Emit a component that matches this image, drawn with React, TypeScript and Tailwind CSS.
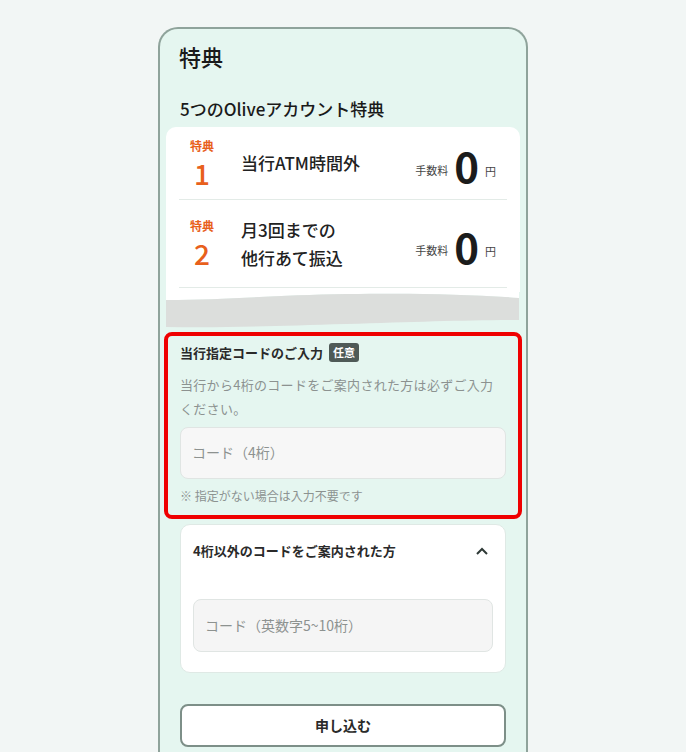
import React from 'react';

const font = { fontFamily: '"Noto Sans CJK JP", "Noto Sans", sans-serif' };

const Perk: React.FC<{ no: string; lines: string[]; h: string }> = ({ no, lines, h }) => (
  <div className={`flex items-center border-b border-[#e3ebe7] ${h}`}>
    <div className="w-[46px] flex flex-col items-center text-[#e8601c] leading-none">
      <span className="text-[12px] font-bold">特典</span>
      <span className="text-[28px] font-medium mt-[7px]">{no}</span>
    </div>
    <div className="ml-[16px] flex-1 text-[17px] font-medium text-[#222] leading-[28px]">
      {lines.map(l => (
        <div key={l}>{l}</div>
      ))}
    </div>
    <div className="flex items-end pr-[11px]">
      <span className="text-[11px] text-[#444] mb-[4px]">手数料</span>
      <span className="text-[42px] font-bold text-[#1c1c1c] leading-none mx-[6px] -mb-[4px]">0</span>
      <span className="text-[11px] text-[#444] mb-[3px]">円</span>
    </div>
  </div>
);

const Wave: React.FC = () => (
  <svg width="353" height="38" viewBox="0 0 353 38" className="block">
    <path d="M0 0 H353 V6 C300 2 250 1 180 2 C110 3 60 8 0 8 Z" fill="#ffffff" />
    <path d="M0 8 C60 8 110 3 180 2 C250 1 300 2 353 6 V28 C300 28 250 30 180 32 C110 34 60 36 0 35 Z" fill="#dcdedc" />
  </svg>
);

export default function App() {
  return (
    <div className="h-[752px] overflow-hidden bg-[#f2f6f5] flex justify-center pt-[27px]" style={font}>
      <div className="w-[370px] h-[760px] border-2 border-b-0 border-[#8fa39b] rounded-t-[20px] bg-[#e5f6f0] px-[6px]">
        <h1 className="text-[22px] font-medium text-[#1a1a1a] pl-[13px] pt-[11px] leading-[33px]">特典</h1>
        <h2 className="text-[17px] font-medium text-[#1a1a1a] pl-[14px] mt-[24px] leading-[24px]">5つのOliveアカウント特典</h2>
        <div className="mt-[6px]">
          <div className="bg-white rounded-t-[10px] px-[13px] pb-[4px]">
            <Perk no="1" lines={['当行ATM時間外']} h="h-[73px]" />
            <Perk no="2" lines={['月3回までの', '他行あて振込']} h="h-[88px]" />
          </div>
          <Wave />
        </div>

        <div className="mt-[2px] mx-[-2px] border-[4px] border-[#ef0000] rounded-[8px] px-[12px] pt-[7px] pb-[10px]">
          <div className="flex items-center gap-[6px]">
            <span className="text-[13px] font-bold text-[#2a2a2a]">当行指定コードのご入力</span>
            <span className="bg-[#4f5a57] text-white text-[11px] font-bold rounded-[3px] px-[4px] leading-[19px]">任意</span>
          </div>
          <p className="mt-[10px] text-[13px] tracking-[0.3px] text-[#8c9290] leading-[24px]">
            当行から4桁のコードをご案内された方は必ずご入力
            <br />
            ください。
          </p>
          <div className="mt-[6px] h-[52px] rounded-[8px] bg-[#f7f7f7] border border-[#e0e5e3] flex items-center px-[11px] text-[14px] text-[#8d9290]">
            コード（4桁）
          </div>
          <p className="mt-[8px] text-[12px] text-[#8c9290] leading-[18px]">※ 指定がない場合は入力不要です</p>
        </div>

        <div className="mt-[5px] mx-[14px] bg-white rounded-[10px] border border-[#dfe9e5] px-[12px] pt-[16px] pb-[20px]">
          <div className="flex items-center justify-between">
            <span className="text-[13px] font-bold text-[#2a2a2a] leading-[20px]">4桁以外のコードをご案内された方</span>
            <svg width="14" height="10" viewBox="0 0 14 10" className="mr-[4px]">
              <path d="M2 8 L7 3 L12 8" fill="none" stroke="#2f3a37" strokeWidth="2" />
            </svg>
          </div>
          <div className="mt-[38px] h-[53px] rounded-[8px] bg-[#f5f5f5] border border-[#e0e5e3] flex items-center px-[11px] text-[14px] text-[#8d9290]">
            コード（英数字5~10桁）
          </div>
        </div>

        <button className="mt-[31px] mx-[14px] w-[326px] h-[43px] rounded-[8px] bg-white border-2 border-[#7d8f88] text-[14px] font-bold text-[#2a2a2a]">
          申し込む
        </button>
      </div>
    </div>
  );
}
